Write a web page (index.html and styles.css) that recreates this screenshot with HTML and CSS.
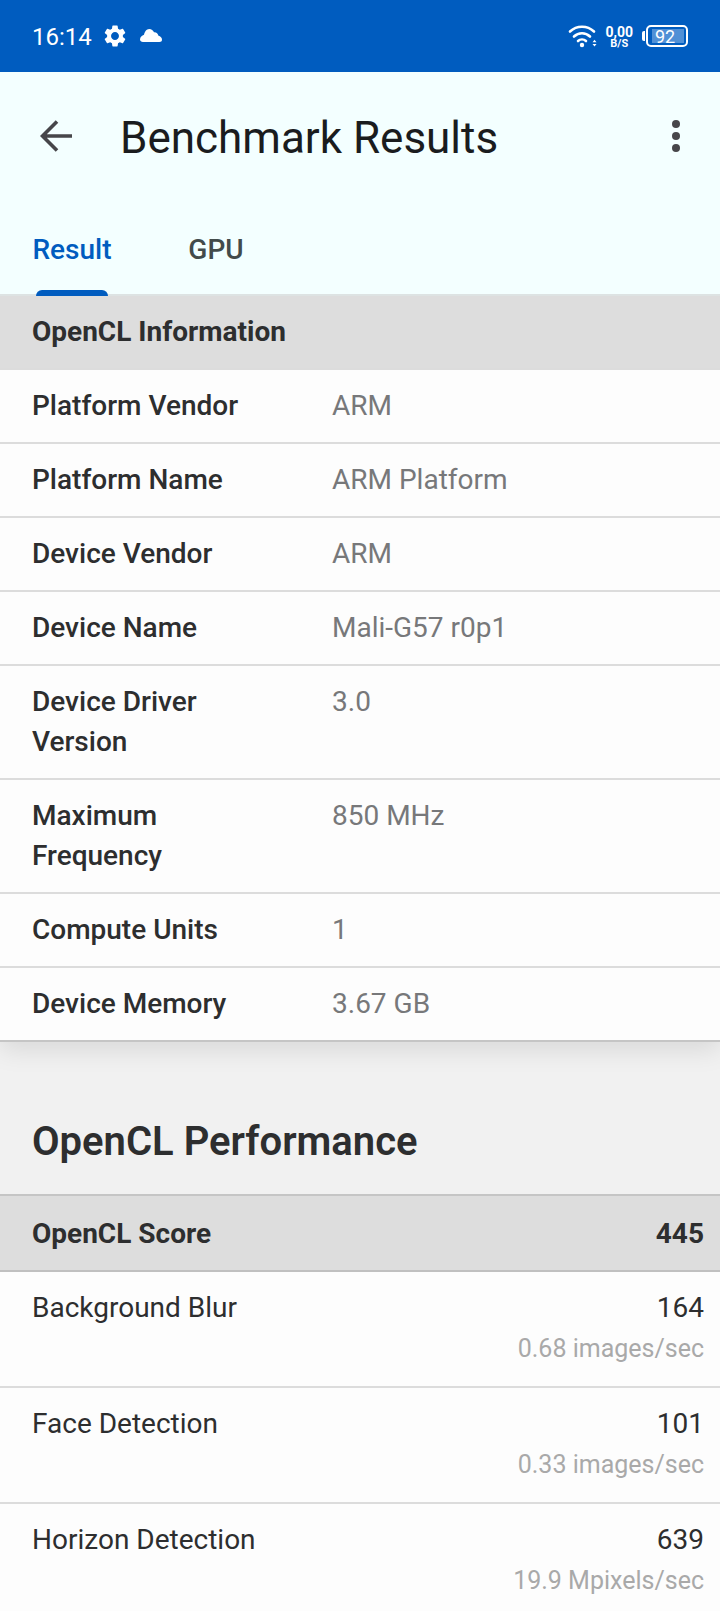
FILE: index.html
```
<!DOCTYPE html>
<html lang="en">
<head>
<meta charset="utf-8">
<meta name="viewport" content="width=device-width, initial-scale=1">
<title>Benchmark Results</title>
<link rel="stylesheet" href="styles.css">
</head>

<body>
<div class="status">
  <span class="clock">16:14</span>
  <svg class="gear" width="22" height="22" viewBox="2 2 20 20" fill="#fff"><path d="M19.14 12.94c.04-.3.06-.61.06-.94 0-.32-.02-.64-.07-.94l2.03-1.58c.18-.14.23-.41.12-.61l-1.92-3.32c-.12-.22-.37-.29-.59-.22l-2.39.96c-.5-.38-1.03-.7-1.62-.94l-.36-2.54c-.04-.24-.24-.41-.48-.41h-3.84c-.24 0-.43.17-.47.41l-.36 2.54c-.59.24-1.13.57-1.62.94l-2.39-.96c-.22-.08-.47 0-.59.22L2.74 8.87c-.12.21-.08.47.12.61l2.03 1.58c-.05.3-.09.63-.09.94s.02.64.07.94l-2.03 1.58c-.18.14-.23.41-.12.61l1.92 3.32c.12.22.37.29.59.22l2.39-.96c.5.38 1.03.7 1.62.94l.36 2.54c.05.24.24.41.48.41h3.84c.24 0 .44-.17.47-.41l.36-2.54c.59-.24 1.13-.56 1.62-.94l2.39.96c.22.08.47 0 .59-.22l1.92-3.32c.12-.22.07-.47-.12-.61l-2.01-1.58zM12 15.6c-1.98 0-3.6-1.62-3.6-3.6s1.62-3.6 3.6-3.6 3.6 1.62 3.6 3.6-1.62 3.6-3.6 3.6z"/></svg>
  <svg class="cloud" width="24" height="24" viewBox="0 0 24 24" fill="#fff"><path d="M4 18C2.300 18 1 17 1 15.500 1 13 3 11.500 5 10.800 5.500 7.800 7.500 5 10.200 5c2.200 0 4 1.500 4.800 3.200 2.200-.3 4 1.200 4.500 3.600 2 .4 3.500 2 3.500 4 0 1.400-1 2.200-2.500 2.200z"/></svg>
  <div class="status-right">
    <svg width="30" height="24" viewBox="0 0 30 24" fill="none" stroke="#fff" stroke-width="2.600" stroke-linecap="round"><path d="M2 7.500a17.500 17.500 0 0 1 24 0M6 12.500a11.500 11.500 0 0 1 16 0M10 17a6 6 0 0 1 8 0"/><circle cx="14" cy="21" r="2.200" fill="#fff" stroke="none"/><path d="M24.500 18.300l2-2.500 2 2.500zM24.500 20l2 2.500 2-2.500z" fill="#fff" stroke="none"/></svg>
    <span class="speed"><b>0,00</b><small>B/S</small></span>
    <span class="battery"><span class="level">92</span></span>
  </div>
</div>

<header class="appbar">
  <div class="toolbar">
    <button class="back" type="button" aria-label="Back">
      <svg width="32" height="32" viewBox="0 0 32 32" fill="none" stroke="#46464a" stroke-width="3.600"><path d="M32 16H3M17 1.500L2.500 16 17 30.500"/></svg>
    </button>
    <h1>Benchmark Results</h1>
    <button class="more" type="button" aria-label="More options">
      <svg width="8" height="32" viewBox="0 0 8 32" fill="#46464a"><circle cx="4" cy="4" r="4"/><circle cx="4" cy="16" r="4"/><circle cx="4" cy="28" r="4"/></svg>
    </button>
  </div>
  <nav class="tabs">
    <a class="current" href="#result">Result</a>
    <a href="#gpu">GPU</a>
  </nav>
</header>

<main id="result">
  <table class="info">
    <colgroup>
      <col class="name">
      <col>
    </colgroup>
    <thead>
      <tr><th colspan="2">OpenCL Information</th></tr>
    </thead>
    <tbody>
      <tr><th scope="row">Platform Vendor</th><td>ARM</td></tr>
      <tr><th scope="row">Platform Name</th><td>ARM Platform</td></tr>
      <tr><th scope="row">Device Vendor</th><td>ARM</td></tr>
      <tr><th scope="row">Device Name</th><td>Mali-G57 r0p1</td></tr>
      <tr><th scope="row">Device Driver Version</th><td>3.0</td></tr>
      <tr><th scope="row">Maximum Frequency</th><td>850 MHz</td></tr>
      <tr><th scope="row">Compute Units</th><td>1</td></tr>
      <tr><th scope="row">Device Memory</th><td>3.67 GB</td></tr>
    </tbody>
  </table>

  <h2>OpenCL Performance</h2>

  <table class="scores">
    <thead>
      <tr><th>OpenCL Score</th><th class="num">445</th></tr>
    </thead>
    <tbody>
      <tr><th scope="row">Background Blur</th><td class="num">164<span>0.68 images/sec</span></td></tr>
      <tr><th scope="row">Face Detection</th><td class="num">101<span>0.33 images/sec</span></td></tr>
      <tr><th scope="row">Horizon Detection</th><td class="num">639<span>19.9 Mpixels/sec</span></td></tr>
    </tbody>
  </table>
</main>
</body>
</html>
```
FILE: styles.css
```
*{ margin:0; padding:0; box-sizing:border-box;}
body{ height:100vh; display:flex; flex-direction:column; overflow:hidden; background:#f1f1f1; color:#2d2e2f; font:28px/40px Roboto, "Liberation Sans", sans-serif;}
button{ border:0; background:none; cursor:pointer;}
a{ text-decoration:none;}
svg{ display:block;}

/* status bar */
.status{ flex:none; height:72px; padding:0 32px; display:flex; align-items:center; background:#005cbf; color:#fff;}
.clock{ font-size:24px; line-height:28px; padding-top:2px;}
.gear{ margin-left:12px;}
.cloud{ margin-left:13px;}
.status-right{ margin-left:auto; display:flex; align-items:center;}
.speed{ margin:0 9px 0 7px; padding-top:2px; display:flex; flex-direction:column; align-items:center; font-size:14px; line-height:12px;}
.speed b{ font-weight:700;}
.speed small{ font-size:11px; line-height:11px; font-weight:700;}
.battery{ position:relative; width:42px; height:22px; padding:2px; border:2px solid #fff; border-radius:5px; margin-left:4px;}
.battery:before{ content:""; position:absolute; left:-6px; top:4px; width:3px; height:10px; border-radius:2px 0 0 2px; background:#fff;}
.level{ display:block; height:14px; margin-left:2px; background:#5090d6; font-size:18px; line-height:16px; padding-left:3px;}

/* title and tabs */
.appbar{ flex:none; background:#f3ffff; border-bottom:2px solid #dde3e3;}
.toolbar{ height:128px; padding:0 40px; display:flex; align-items:center;}
.toolbar h1{ flex:1; margin-left:48px; padding-top:4px; font-size:44px; line-height:56px; font-weight:400; color:#1a1c1e;}
.tabs{ height:96px; margin-bottom:-2px; display:flex;}
.tabs a{ position:relative; min-width:144px; line-height:100px; text-align:center; font-weight:500; color:#424b4b;}
.tabs .current{ color:#005cbf;}
.tabs .current:after{ content:""; position:absolute; left:36px; right:36px; bottom:0; height:6px; border-radius:6px 6px 0 0; background:#005cbf;}

/* tables */
main{ flex:1; min-height:0; overflow-y:auto; scrollbar-width:none;}
table{ width:100%; border-collapse:separate; border-spacing:0; table-layout:fixed; background:#fdfdfd;}
th,td{ padding:16px 16px 16px 32px; border-bottom:2px solid #dcdcdc; text-align:left; vertical-align:top;}
thead th{ background:#ddd; font-weight:700;}
.info{ box-shadow:0 8px 24px rgba(0,0,0,.1);}
.info .name{ width:41.67%;}
.info tbody th{ font-weight:500;}
.info td{ color:#77787a;}
.info tbody tr:last-child td,.info tbody tr:last-child th{ border-color:#c5c5c5;}

h2{ padding:76px 32px 28px; font-size:40px; line-height:48px; font-weight:600;}

.scores thead th{ padding-top:18px; border-top:2px solid #c5c5c5; border-bottom-color:#c0c0c0;}
.scores tbody th{ font-weight:400;}
.scores .num{ text-align:right;}
.scores td span{ display:block; font-size:25px; line-height:42px; color:#a9a9a9;}
```
